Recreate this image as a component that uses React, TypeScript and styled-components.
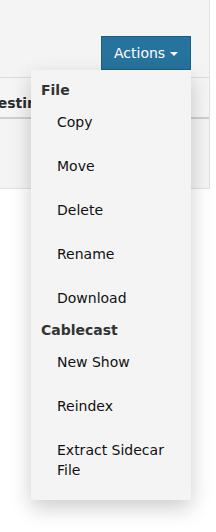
import React from 'react';
import styled, { createGlobalStyle } from 'styled-components';

const GlobalStyle = createGlobalStyle`
    html, body {
        margin: 0;
        padding: 0;
        background: #ffffff;
        font-family: 'DejaVu Sans', Verdana, sans-serif;
        font-size: 14px;
        color: #222;
    }
`;

const Page = styled.div`
    min-height: 100vh;
    position: relative;
`;

const Panel = styled.div`
    width: 209px;
    height: 188px;
    background: #f4f4f4;
    border-right: 1px solid #e0e0e0;
    border-bottom: 1px solid #e0e0e0;
    overflow: visible;
`;

const Toolbar = styled.div`
    display: flex;
    justify-content: flex-end;
    padding: 36px 18px 0 0;
    position: relative;
    z-index: 5;
`;

const ButtonWrap = styled.div`
    position: relative;
`;

const ActionsButton = styled.button`
    display: flex;
    align-items: center;
    gap: 5px;
    height: 34px;
    width: 90px;
    padding: 0 0 0 12px;
    background: #26739e;
    border: 1px solid #1d5e84;
    color: #ffffff;
    font-family: inherit;
    font-size: 14px;
    cursor: pointer;
`;

const Caret = styled.span`
    width: 0;
    height: 0;
    margin-top: 2px;
    border-left: 4px solid transparent;
    border-right: 4px solid transparent;
    border-top: 4px solid #ffffff;
`;

const TabRow = styled.div`
    margin-top: 7px;
    height: 39px;
    display: flex;
    align-items: center;
    border-top: 1px solid #dcdcdc;
    border-bottom: 2px solid #cfcfcf;
    background: #f5f5f5;
    overflow: hidden;
`;

const TabLabel = styled.span`
    font-weight: bold;
    color: #2a2a2a;
    margin-left: -10px;
    padding-top: 10px;
    white-space: nowrap;
`;

const Menu = styled.ul`
    position: absolute;
    top: 100%;
    right: 0;
    width: 160px;
    margin: 0;
    padding: 10px 0 8px;
    list-style: none;
    background: #f4f4f4;
    box-shadow: 0 8px 20px rgba(0, 0, 0, 0.2);
    z-index: 10;
`;

const Header = styled.li`
    padding: 0 10px;
    line-height: 20px;
    font-weight: bold;
    color: #333;
`;

const Item = styled.li`
    padding: 12px 20px 12px 26px;
    line-height: 20px;
    color: #111;
    cursor: pointer;
`;

const groups = [
    { title: 'File', items: ['Copy', 'Move', 'Delete', 'Rename', 'Download'] },
    { title: 'Cablecast', items: ['New Show', 'Reindex', 'Extract Sidecar File'] },
];

export default function App() {
    return (
        <Page>
            <GlobalStyle />
            <Panel>
                <Toolbar>
                    <ButtonWrap>
                        <ActionsButton>
                            Actions <Caret />
                        </ActionsButton>
                        <Menu>
                            {groups.map((g) => (
                                <React.Fragment key={g.title}>
                                    <Header>{g.title}</Header>
                                    {g.items.map((i) => (
                                        <Item key={i}>{i}</Item>
                                    ))}
                                </React.Fragment>
                            ))}
                        </Menu>
                    </ButtonWrap>
                </Toolbar>
                <TabRow>
                    <TabLabel>Testing</TabLabel>
                </TabRow>
            </Panel>
        </Page>
    );
}
